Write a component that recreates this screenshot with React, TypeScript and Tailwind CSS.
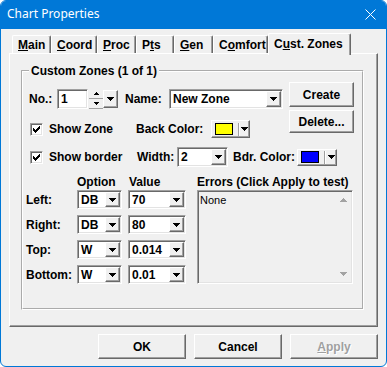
import React from "react";

// classic 3D edges
const raised =
  "border border-t-white border-l-white border-r-[#696969] border-b-[#696969] shadow-[inset_-1px_-1px_0_#a0a0a0]";
const sunken =
  "border border-t-[#a0a0a0] border-l-[#a0a0a0] border-r-white border-b-white shadow-[inset_1px_1px_0_#696969,inset_-1px_-1px_0_#e3e3e3]";

const DownArrow = ({ color = "#000" }: { color?: string }) => (
  <svg width="7" height="4" viewBox="0 0 7 4" shapeRendering="crispEdges">
    <path d="M0 0H7V1H6V2H5V3H4V4H3V3H2V2H1V1H0Z" fill={color} />
  </svg>
);

const UpArrow = ({ color = "#000" }: { color?: string }) => (
  <svg width="7" height="4" viewBox="0 0 7 4" shapeRendering="crispEdges">
    <path d="M3 0H4V1H5V2H6V3H7V4H0V3H1V2H2V1H3Z" fill={color} />
  </svg>
);

const SmallArrow = ({ up }: { up?: boolean }) => (
  <svg width="5" height="3" viewBox="0 0 5 3" shapeRendering="crispEdges">
    <path
      d={up ? "M2 0H3V1H4V2H5V3H0V2H1V1H2Z" : "M0 0H5V1H4V2H3V3H2V2H1V1H0Z"}
      fill="#000"
    />
  </svg>
);

const DropBtn = ({ className = "" }: { className?: string }) => (
  <div
    className={`${raised} bg-[#f0f0f0] flex items-center justify-center ${className}`}
  >
    <DownArrow />
  </div>
);

function Combo({ value, className }: { value: string; className: string }) {
  return (
    <div className={`${sunken} bg-white flex items-stretch ${className}`}>
      <span className="flex-1 pl-[3px] flex items-center">{value}</span>
      <DropBtn className="w-[15px] m-[1px]" />
    </div>
  );
}

function CheckBox() {
  const cols = [2, 3, 4, 3, 2, 1, 0];
  return (
    <div
      className={`${sunken} bg-white w-[13px] h-[13px] flex items-center justify-center shrink-0`}
    >
      <svg width="7" height="7" viewBox="0 0 7 7" shapeRendering="crispEdges">
        {cols.map((y, x) => (
          <rect key={x} x={x} y={y} width="1" height="3" fill="#000" />
        ))}
      </svg>
    </div>
  );
}

function ColorBtn({ swatch, className }: { swatch: string; className: string }) {
  return (
    <div className={`${raised} bg-[#f0f0f0] flex items-center pl-[3px] ${className}`}>
      <div className={`w-[18px] h-[12px] border border-black ${swatch}`} />
      <div className="ml-[5px] w-[2px] h-[13px] border-l border-l-[#a0a0a0] border-r border-r-white" />
      <div className="flex-1 flex justify-center">
        <DownArrow />
      </div>
    </div>
  );
}

const tabs = [
  { pre: "", u: "M", post: "ain", w: "w-[39px]" },
  { pre: "", u: "C", post: "oord", w: "w-[46px]" },
  { pre: "", u: "P", post: "roc", w: "w-[39px]" },
  { pre: "P", u: "t", post: "s", w: "w-[38px]" },
  { pre: "", u: "G", post: "en", w: "w-[39px]" },
  { pre: "C", u: "o", post: "mfort", w: "w-[55px]" },
];

const zoneRows = [
  { label: "Left:", opt: "DB", val: "70" },
  { label: "Right:", opt: "DB", val: "80" },
  { label: "Top:", opt: "W", val: "0.014" },
  { label: "Bottom:", opt: "W", val: "0.01" },
];

export default function App() {
  return (
    <div className="w-[387px] h-[367px] bg-[#f0f0f0] border border-[#0078d7] rounded-[6px] overflow-hidden flex flex-col font-['Liberation_Sans',Arial,sans-serif] text-[12px] leading-[14px] font-bold text-black">
      {/* title bar */}
      <div className="h-[28px] shrink-0 bg-[#0078d7] flex items-center justify-between pl-[6px] pr-[10px] text-white font-normal font-['Noto_Sans',sans-serif] text-[12px]">
        <span className="-mt-[2px]">Chart Properties</span>
        <svg width="11" height="11" viewBox="0 0 11 11" className="-mt-[2px]">
          <path d="M0.5 0.5L10.5 10.5M10.5 0.5L0.5 10.5" stroke="#fff" strokeWidth="1" />
        </svg>
      </div>

      <div className="px-[8px]">
        {/* tabs */}
        <div className="flex items-end h-[20px] mt-[4px] pl-[3px]">
          {tabs.map((t) => (
            <div
              key={t.post}
              className={`${t.w} h-[18px] border-t border-l border-t-white border-l-white border-r border-r-[#696969] shadow-[inset_-1px_0_0_#a0a0a0] rounded-t-[2px] pl-[5px] flex items-center`}
            >
              {t.pre}
              <u className="underline-offset-[1px]">{t.u}</u>
              {t.post}
            </div>
          ))}
          <div className="relative z-10 w-[83px] h-[22px] -mb-[2px] bg-[#f0f0f0] border-t border-l border-t-white border-l-white border-r border-r-[#696969] shadow-[inset_-1px_0_0_#a0a0a0] rounded-t-[2px] pl-[5px] flex items-center pb-[2px]">
            C<u className="underline-offset-[1px]">u</u>st. Zones
          </div>
        </div>

        {/* tab panel */}
        <div className={`${raised} h-[274px] pt-[10px] pl-[11px]`}>
          <fieldset className="w-[343px] h-[246px] border-2 border-white [border-style:groove] rounded-[1px]">
            <legend className="ml-[6px] px-[2px]">Custom Zones (1 of 1)</legend>
            <div className="pl-[6px]">
              <div className="flex mt-[4px]">
                <div className="w-[260px] flex flex-col">
                  {/* row 1 */}
                  <div className="mt-[7px] h-[20px] flex items-stretch">
                    <span className="w-[28px] flex items-center">No.:</span>
                    <div className={`${sunken} bg-white w-[31px] pl-[3px] flex items-center`}>1</div>
                    <div className="ml-[1px] w-[14px] flex flex-col">
                      <div className="flex-1 border-b border-b-[#a0a0a0] flex items-center justify-center">
                        <SmallArrow up />
                      </div>
                      <div className="flex-1 border-b border-b-[#a0a0a0] flex items-center justify-center">
                        <SmallArrow />
                      </div>
                    </div>
                    <DropBtn className="w-[15px] my-[1px]" />
                    <span className="ml-[7px] w-[44px] flex items-center">Name:</span>
                    <Combo value="New Zone" className="w-[114px]" />
                  </div>
                  {/* row 2 */}
                  <div className="mt-[11px] h-[18px] flex items-center">
                    <div className="w-[107px] flex items-center">
                      <div className="ml-[1px]">
                        <CheckBox />
                      </div>
                      <span className="ml-[6px]">Show Zone</span>
                    </div>
                    <span className="w-[75px]">Back Color:</span>
                    <ColorBtn swatch="bg-[#ffff00]" className="w-[39px] h-[18px]" />
                  </div>
                </div>
                <div className="flex flex-col w-[65px]">
                  <div className={`${raised} h-[25px] flex items-center justify-center`}>Create</div>
                  <div className={`${raised} mt-[3px] h-[23px] flex items-center justify-center`}>
                    Delete...
                  </div>
                </div>
              </div>

              {/* row 3 */}
              <div className="mt-[9px] h-[20px] flex items-stretch">
                <div className="w-[108px] flex items-center">
                  <div className="ml-[1px]">
                    <CheckBox />
                  </div>
                  <span className="ml-[6px]">Show border</span>
                </div>
                <span className="w-[40px] flex items-center">Width:</span>
                <Combo value="2" className="w-[51px]" />
                <span className="ml-[5px] w-[64px] flex items-center">Bdr. Color:</span>
                <div className="flex items-center">
                  <ColorBtn swatch="bg-[#0000ff]" className="w-[40px] h-[17px]" />
                </div>
              </div>

              {/* zone edges + errors */}
              <div className="mt-[7px] flex">
                <div className="w-[168px] flex flex-col">
                  <div className="h-[16px] flex items-center">
                    <span className="w-[48px]" />
                    <span className="w-[52px]">Option</span>
                    <span>Value</span>
                  </div>
                  {zoneRows.map((r, i) => (
                    <div
                      key={r.label}
                      className={`h-[19px] flex items-stretch ${i > 0 ? "mt-[6px]" : ""}`}
                    >
                      <span className="-ml-[3px] w-[51px] flex items-center">{r.label}</span>
                      <Combo value={r.opt} className="w-[45px]" />
                      <Combo value={r.val} className="ml-[6px] w-[58px]" />
                    </div>
                  ))}
                </div>
                <div className="w-[156px] flex flex-col">
                  <div className="h-[16px] flex items-center">Errors (Click Apply to test)</div>
                  <div className={`${sunken} h-[94px] bg-[#f0f0f0] flex`}>
                    <span className="flex-1 pl-[2px] pt-[3px] font-normal text-[11px] leading-[13px]">
                      None
                    </span>
                    <div className="w-[17px] flex flex-col items-center justify-between py-[7px]">
                      <UpArrow color="#a3a3a3" />
                      <DownArrow color="#a3a3a3" />
                    </div>
                  </div>
                </div>
              </div>
            </div>
          </fieldset>
        </div>

        {/* dialog buttons */}
        <div className="mt-[7px] flex justify-end gap-[8px]">
          <div className={`${raised} w-[88px] h-[25px] flex items-center justify-center`}>OK</div>
          <div className={`${raised} w-[88px] h-[25px] flex items-center justify-center`}>Cancel</div>
          <div
            className={`${raised} w-[88px] h-[25px] flex items-center justify-center text-[#a0a0a0] [text-shadow:1px_1px_0_#fff]`}
          >
            <u className="underline-offset-[1px]">A</u>pply
          </div>
        </div>
      </div>
    </div>
  );
}
